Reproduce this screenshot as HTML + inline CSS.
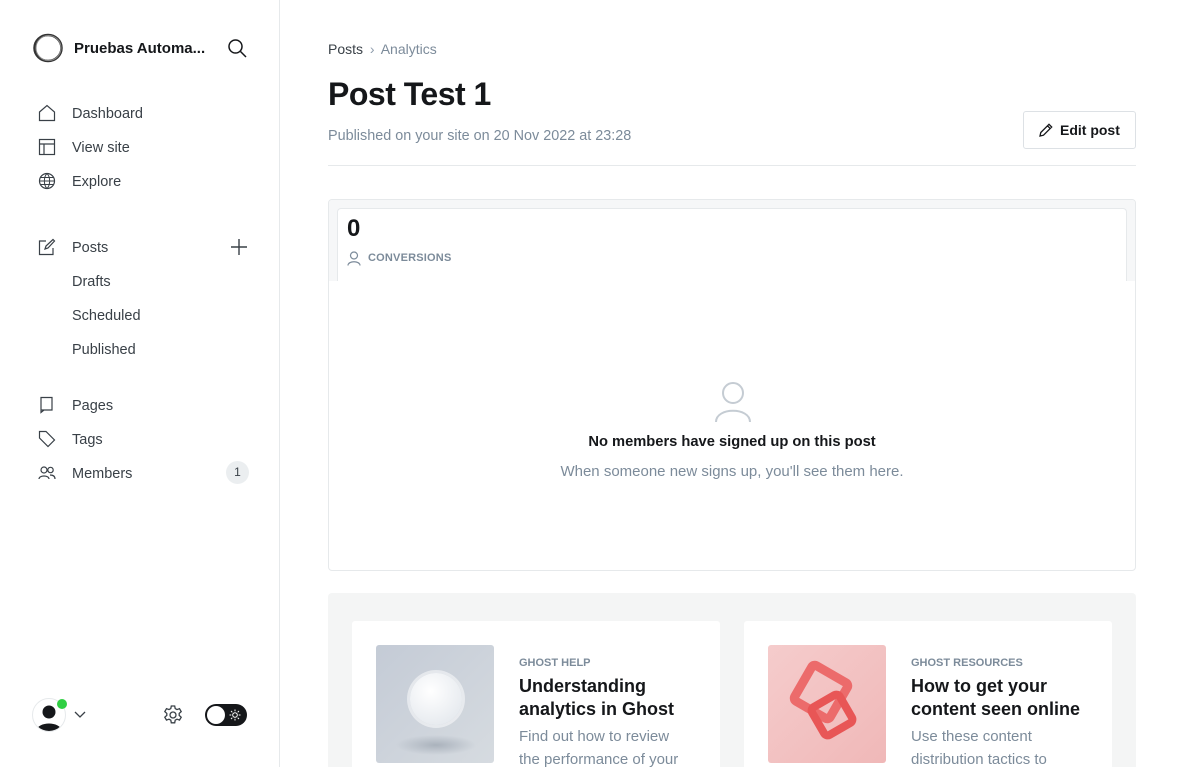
<!DOCTYPE html>
<html style="width:1184px;height:767px;overflow:hidden"><head><meta charset="utf-8"><style>
*{box-sizing:border-box;margin:0;padding:0}
body{width:1184px;height:767px;overflow:hidden;font-family:"Liberation Sans",sans-serif;background:#fff;color:#15171a;position:relative}
.side{position:absolute;left:0;top:0;width:280px;height:767px;border-right:1px solid #e6e9eb}
.nav{position:absolute;left:72px;font-size:14.5px;color:#394047}
.ic{position:absolute;left:38px}
svg{display:block}
.main{position:absolute;left:328px;top:0;width:808px;height:767px;overflow:hidden}
</style></head><body>
<div class="side">
  <svg style="position:absolute;left:32px;top:33px" width="32" height="30" viewBox="0 0 32 30"><ellipse cx="16" cy="15" rx="13.5" ry="13" fill="none" stroke="#333" stroke-width="2.5"/><ellipse cx="16.5" cy="15" rx="12.5" ry="12.5" fill="none" stroke="#888" stroke-width="1"/></svg>
  <div style="position:absolute;left:74px;top:40px;font-size:15px;font-weight:bold;color:#15171a">Pruebas Automa...</div>
  <svg style="position:absolute;left:227px;top:38px" width="20" height="20" viewBox="0 0 20 20"><circle cx="8.5" cy="8.5" r="6.5" fill="none" stroke="#15171a" stroke-width="1.5"/><path d="M13.5 13.5L19 19" stroke="#15171a" stroke-width="1.5"/></svg>

  <svg class="ic" style="top:104px" width="18" height="18" viewBox="0 0 18 18"><path d="M1.5 8L9 1.5 16.5 8V16.5H1.5Z" fill="none" stroke="#394047" stroke-width="1.2"/></svg>
  <div class="nav" style="top:106px">Dashboard</div>
  <svg class="ic" style="top:138px" width="18" height="18" viewBox="0 0 18 18"><rect x="1.5" y="1.5" width="15" height="15" fill="none" stroke="#394047" stroke-width="1.2"/><path d="M1.5 6H16.5M6 6V16.5" stroke="#394047" stroke-width="1.2"/></svg>
  <div class="nav" style="top:140px">View site</div>
  <svg class="ic" style="top:172px" width="18" height="18" viewBox="0 0 18 18"><circle cx="9" cy="9" r="7.5" fill="none" stroke="#394047" stroke-width="1.2"/><path d="M1.5 9H16.5M2.5 5.5H15.5M2.5 12.5H15.5M9 1.5C5.5 5 5.5 13 9 16.5M9 1.5C12.5 5 12.5 13 9 16.5" fill="none" stroke="#394047" stroke-width="1"/></svg>
  <div class="nav" style="top:174px">Explore</div>

  <svg class="ic" style="top:238px" width="18" height="18" viewBox="0 0 18 18"><path d="M8 3H1.5V16.5H15V10M7 11L8 8 15 1.5 16.5 3 10 10Z" fill="none" stroke="#394047" stroke-width="1.2"/></svg>
  <div class="nav" style="top:240px">Posts</div>
  <svg style="position:absolute;left:230px;top:238px" width="18" height="18" viewBox="0 0 18 18"><path d="M9 1V17M1 9H17" stroke="#394047" stroke-width="1.4"/></svg>
  <div class="nav" style="top:274px">Drafts</div>
  <div class="nav" style="top:308px">Scheduled</div>
  <div class="nav" style="top:342px">Published</div>

  <svg class="ic" style="top:396px" width="18" height="18" viewBox="0 0 18 18"><path d="M3 1.5H14V14H3ZM3 1.5V16.5L6 14" fill="none" stroke="#394047" stroke-width="1.2"/></svg>
  <div class="nav" style="top:398px">Pages</div>
  <svg class="ic" style="top:430px" width="18" height="18" viewBox="0 0 18 18"><path d="M1.5 1.5H8L16.5 10 10 16.5 1.5 8Z" fill="none" stroke="#394047" stroke-width="1.2"/></svg>
  <div class="nav" style="top:432px">Tags</div>
  <svg class="ic" style="top:465px" width="18" height="16" viewBox="0 0 18 16"><circle cx="6" cy="5" r="3" fill="none" stroke="#394047" stroke-width="1.2"/><circle cx="12.5" cy="5" r="2.7" fill="none" stroke="#394047" stroke-width="1.2"/><path d="M1 14C1 10 11 10 11 14M12 10C15 10 17 11 17 14" fill="none" stroke="#394047" stroke-width="1.2"/></svg>
  <div class="nav" style="top:466px">Members</div>
  <div style="position:absolute;left:226px;top:461px;width:23px;height:23px;border-radius:50%;background:#ebeef0;font-size:12px;color:#394047;text-align:center;line-height:23px">1</div>

  <div style="position:absolute;left:32px;top:698px;width:34px;height:34px;border-radius:50%;border:1px solid #e6e9eb;overflow:hidden;background:#fff">
    <svg width="34" height="34" viewBox="0 0 34 34"><circle cx="16" cy="13" r="6.5" fill="#15171a"/><path d="M3 32C5 22 27 22 29 32Z" fill="#15171a"/></svg>
  </div>
  <div style="position:absolute;left:57px;top:699px;width:10px;height:10px;border-radius:50%;background:#30cf43"></div>
  <svg style="position:absolute;left:74px;top:711px" width="12" height="8" viewBox="0 0 12 8"><path d="M1 1L6 6 11 1" fill="none" stroke="#394047" stroke-width="1.3"/></svg>
  <svg style="position:absolute;left:162px;top:704px" width="22" height="22" viewBox="0 0 22 22"><path d="M9.3 2h3.4l.5 2.6 1.8 1 2.5-.9 1.7 2.9-2 1.8v2l2 1.8-1.7 2.9-2.5-.9-1.8 1-.5 2.6H9.3l-.5-2.6-1.8-1-2.5.9-1.7-2.9 2-1.8v-2l-2-1.8 1.7-2.9 2.5.9 1.8-1z" fill="none" stroke="#394047" stroke-width="1.3"/><circle cx="11" cy="11" r="3" fill="none" stroke="#394047" stroke-width="1.3"/></svg>
  <div style="position:absolute;left:205px;top:704px;width:42px;height:22px;border-radius:11px;background:#15171a">
    <div style="position:absolute;left:2px;top:2px;width:18px;height:18px;border-radius:50%;background:#fff"></div>
    <svg style="position:absolute;left:24px;top:5px" width="12" height="12" viewBox="0 0 12 12"><circle cx="6" cy="6" r="2.3" fill="none" stroke="#fff" stroke-width="1"/><path d="M6 0.5V2.3M6 9.7V11.5M0.5 6H2.3M9.7 6H11.5M2 2L3.3 3.3M8.7 8.7L10 10M2 10L3.3 8.7M8.7 3.3L10 2" stroke="#fff" stroke-width="1"/></svg>
  </div>
</div>

<div class="main">
  <div style="position:absolute;top:41px;font-size:14px;color:#394047">Posts <span style="color:#8e9cac;margin:0 3px">›</span> <span style="color:#7c8b9a">Analytics</span></div>
  <div style="position:absolute;top:76px;font-size:32px;font-weight:bold;letter-spacing:-0.5px;color:#15171a">Post Test 1</div>
  <div style="position:absolute;top:128px;font-size:14.4px;color:#7c8b9a">Published on your site on 20 Nov 2022 at 23:28</div>
  <div style="position:absolute;left:695px;top:111px;width:113px;height:38px;border:1px solid #dde1e5;border-radius:3px;font-size:14px;font-weight:bold;color:#15171a;line-height:36px;padding-left:36px">Edit post
    <svg style="position:absolute;left:14px;top:10px" width="16" height="16" viewBox="0 0 16 16"><path d="M2 14L2.8 10.5 11 2.3 13.7 5 5.5 13.2Z M9.5 3.8L12.2 6.5" fill="none" stroke="#15171a" stroke-width="1.3"/></svg>
  </div>
  <div style="position:absolute;top:165px;width:808px;height:1px;background:#e6e9eb"></div>

  <div style="position:absolute;top:199px;width:808px;height:372px;border:1px solid #e6e9eb;border-radius:4px;overflow:hidden">
    <div style="height:81px;background:#f6f7f8;padding:8px 8px 0 8px">
      <div style="height:73px;background:#fff;border:1px solid #e6e9eb;border-bottom:none;border-radius:4px 4px 0 0;position:relative">
        <div style="position:absolute;left:9px;top:6px;font-size:24px;font-weight:bold;color:#15171a">0</div>
        <svg style="position:absolute;left:9px;top:42px" width="14" height="15" viewBox="0 0 14 15"><circle cx="7" cy="4.5" r="3.5" fill="none" stroke="#7c8b9a" stroke-width="1.2"/><path d="M1 14.5C1 9.5 13 9.5 13 14.5" fill="none" stroke="#7c8b9a" stroke-width="1.2"/></svg>
        <div style="position:absolute;left:30px;top:43px;font-size:11px;font-weight:bold;color:#7c8b9a;letter-spacing:0.2px">CONVERSIONS</div>
      </div>
    </div>
    <svg style="position:absolute;left:385px;top:181px" width="38" height="42" viewBox="0 0 38 42"><circle cx="19" cy="12" r="10" fill="none" stroke="#c5ccd3" stroke-width="2"/><path d="M2 41C2 26 36 26 36 41" fill="none" stroke="#c5ccd3" stroke-width="2"/></svg>
    <div style="position:absolute;left:0;width:806px;top:234px;text-align:center;font-size:14.7px;font-weight:bold;color:#15171a">No members have signed up on this post</div>
    <div style="position:absolute;left:0;width:806px;top:263px;text-align:center;font-size:15px;color:#7c8b9a">When someone new signs up, you'll see them here.</div>
  </div>

  <div style="position:absolute;top:593px;width:808px;height:174px;background:#f4f5f5;border-radius:4px 4px 0 0;overflow:hidden">
    <div style="position:absolute;left:24px;top:28px;width:368px;height:146px;background:#fff;border-radius:3px 3px 0 0">
      <div style="position:absolute;left:24px;top:24px;width:118px;height:118px;border-radius:3px;background:radial-gradient(ellipse 40px 10px at 60px 100px,#aab2bc,rgba(0,0,0,0)),linear-gradient(135deg,#c4cbd6,#d6dbe0)">
        <div style="position:absolute;left:34px;top:28px;width:52px;height:52px;border-radius:50%;background:radial-gradient(circle at 40% 35%,#fff,#dfe4ea);box-shadow:0 0 0 3px rgba(255,255,255,0.5)"></div>
      </div>
      <div style="position:absolute;left:167px;top:36px;font-size:11px;font-weight:bold;color:#7c8b9a">GHOST HELP</div>
      <div style="position:absolute;left:167px;top:54px;width:180px;font-size:18px;font-weight:bold;line-height:23px;color:#15171a">Understanding analytics in Ghost</div>
      <div style="position:absolute;left:167px;top:104px;width:172px;font-size:15px;line-height:23px;color:#7c8b9a">Find out how to review the performance of your</div>
    </div>
    <div style="position:absolute;left:416px;top:28px;width:368px;height:146px;background:#fff;border-radius:3px 3px 0 0">
      <div style="position:absolute;left:24px;top:24px;width:118px;height:118px;border-radius:3px;background:linear-gradient(135deg,#f5cccc,#f0b8b8)">
        <div style="position:absolute;left:28px;top:22px;width:50px;height:50px;transform:rotate(30deg);border:9px solid #ec6b6b;border-radius:8px"></div>
        <div style="position:absolute;left:44px;top:50px;width:40px;height:40px;transform:rotate(60deg);border:8px solid #e85656;border-radius:8px"></div>
      </div>
      <div style="position:absolute;left:167px;top:36px;font-size:11px;font-weight:bold;color:#7c8b9a">GHOST RESOURCES</div>
      <div style="position:absolute;left:167px;top:54px;width:190px;font-size:18px;font-weight:bold;line-height:23px;color:#15171a">How to get your content seen online</div>
      <div style="position:absolute;left:167px;top:104px;width:165px;font-size:15px;line-height:23px;color:#7c8b9a">Use these content distribution tactics to</div>
    </div>
  </div>
</div>
</body></html>
